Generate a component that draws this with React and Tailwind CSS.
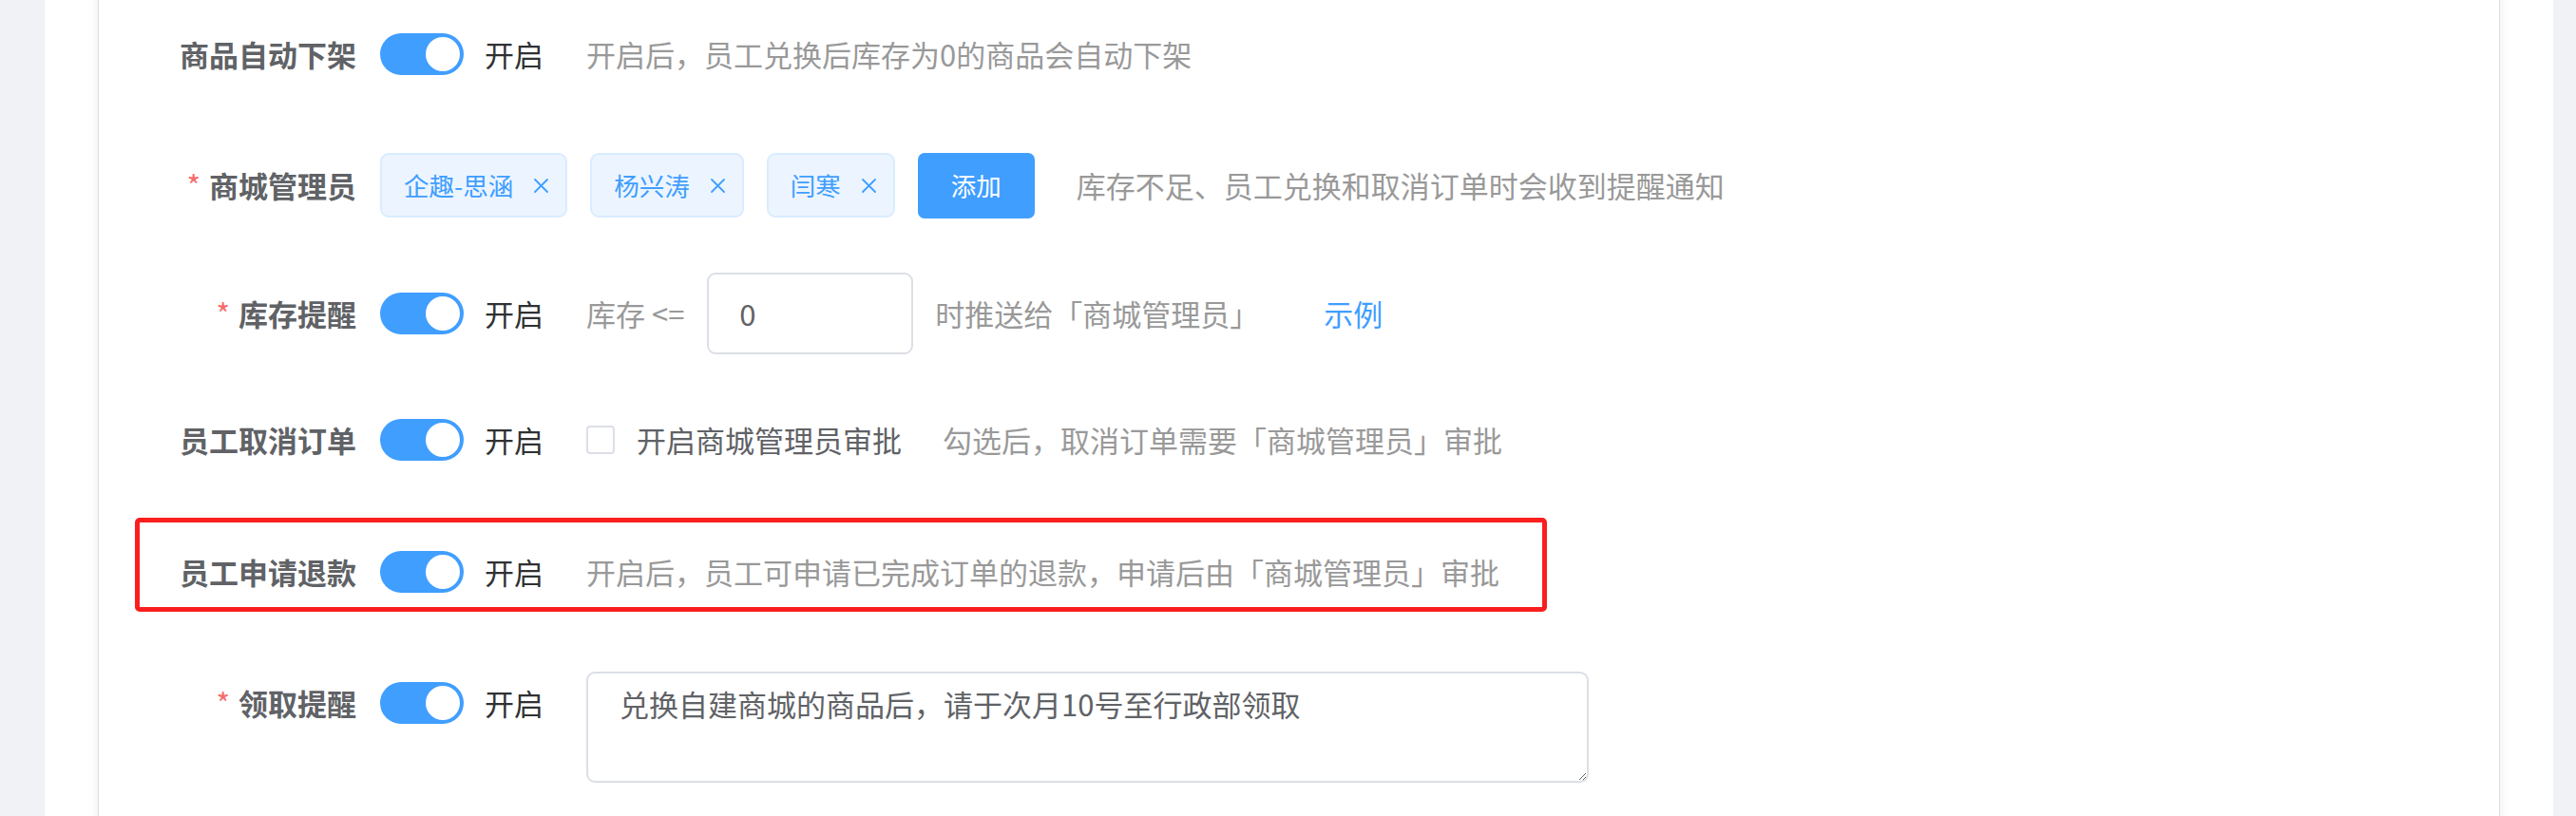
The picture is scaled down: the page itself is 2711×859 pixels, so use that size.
import React from 'react';

// ─── small parts ────────────────────────────────────────────────────────────

const Toggle = () => (
  <div className="relative w-[88px] h-[44px] rounded-full bg-[#409eff] shrink-0">
    <span className="absolute right-[4px] top-[4px] w-[36px] h-[36px] rounded-full bg-white" />
  </div>
);

const Label = ({ children, required }) => (
  <div className="w-[296px] pr-[25px] shrink-0 flex items-center justify-end h-[86px] text-[31px] font-bold text-[#606266]">
    {required && <span className="text-[#f56c6c] font-normal mr-[9px]">*</span>}
    {children}
  </div>
);

const SwitchOn = () => (
  <div className="flex items-center h-[86px] shrink-0">
    <Toggle />
    <span className="ml-[22px] text-[31px] text-[#303133]">开启</span>
  </div>
);

const Hint = ({ children, className = '' }) => (
  <span className={`text-[31px] text-[#999999] whitespace-nowrap ${className}`}>{children}</span>
);

const Tag = ({ name }) => (
  <div className="flex items-center h-[68px] pl-[23px] pr-[17px] gap-[21px] border-2 border-[#d9ecff] bg-[#ecf5ff] rounded-[9px] text-[26.5px] text-[#409eff] whitespace-nowrap">
    <span>{name}</span>
    <svg width="17" height="17" viewBox="0 0 17 17" className="shrink-0">
      <path d="M2 2 L15 15 M15 2 L2 15" stroke="#409eff" strokeWidth="1.8" strokeLinecap="round" />
    </svg>
  </div>
);

// ─── Page ───────────────────────────────────────────────────────────────────

const App = () => {
  return (
    <div className="relative w-full h-[859px] overflow-hidden flex bg-[#f0f2f5] font-['Noto_Sans_CJK_SC',sans-serif]">
      <div className="w-[47px] shrink-0" />

      <div className="flex-1 bg-white px-[56px]">
        {/* card runs past the top and bottom of the view */}
        <div className="-mt-[30px] h-[919px] flex flex-col bg-white border-x border-[#dcdfe6] shadow-[0_0_10px_rgba(0,0,0,0.08)]">
          {/* 商品自动下架 */}
          <div className="flex items-center mt-[44px] h-[86px]">
            <Label>商品自动下架</Label>
            <SwitchOn />
            <Hint className="ml-[45px]">开启后，员工兑换后库存为0的商品会自动下架</Hint>
          </div>

          {/* 商城管理员 */}
          <div className="flex items-center mt-[52px] h-[86px]">
            <Label required>商城管理员</Label>
            <div className="flex items-center gap-[24px]">
              <Tag name="企趣-思涵" />
              <Tag name="杨兴涛" />
              <Tag name="闫寒" />
              <button className="w-[123px] h-[69px] rounded-[7px] bg-[#409eff] text-white text-[26.5px]">
                添加
              </button>
            </div>
            <Hint className="ml-[44px]">库存不足、员工兑换和取消订单时会收到提醒通知</Hint>
          </div>

          {/* 库存提醒 */}
          <div className="flex items-center mt-[49px] h-[86px]">
            <Label required>库存提醒</Label>
            <SwitchOn />
            <Hint className="ml-[45px]">库存 &lt;=</Hint>
            <div className="ml-[24px] w-[217px] h-[86px] border-2 border-[#dcdfe6] rounded-[9px] flex items-center pl-[32px] text-[31px] text-[#606266]">
              0
            </div>
            <Hint className="ml-[23px]">时推送给「商城管理员」</Hint>
            <span className="ml-[68px] text-[31px] text-[#409eff]">示例</span>
          </div>

          {/* 员工取消订单 */}
          <div className="flex items-center mt-[47px] h-[86px]">
            <Label>员工取消订单</Label>
            <SwitchOn />
            <span className="ml-[45px] w-[30px] h-[30px] border-2 border-[#dcdfe6] rounded-[4px] bg-white shrink-0" />
            <span className="ml-[23px] text-[31px] text-[#606266] whitespace-nowrap">开启商城管理员审批</span>
            <Hint className="ml-[43px]">勾选后，取消订单需要「商城管理员」审批</Hint>
          </div>

          {/* 员工申请退款 */}
          <div className="flex items-center mt-[53px] h-[86px]">
            <Label>员工申请退款</Label>
            <SwitchOn />
            <Hint className="ml-[45px]">开启后，员工可申请已完成订单的退款，申请后由「商城管理员」审批</Hint>
          </div>

          {/* 领取提醒 */}
          <div className="flex items-start mt-[52px]">
            <Label required>领取提醒</Label>
            <SwitchOn />
            <textarea
              readOnly
              defaultValue="兑换自建商城的商品后，请于次月10号至行政部领取"
              className="ml-[45px] mt-[10px] w-[1055px] h-[117px] border-2 border-[#dcdfe6] rounded-[9px] px-[33px] py-[9px] text-[31px] leading-[1.5] text-[#606266] resize-y outline-none"
            />
          </div>
        </div>
      </div>

      <div className="w-[24px] shrink-0" />

      {/* highlight annotation */}
      <div className="absolute left-[142px] top-[545px] w-[1486px] h-[99px] border-[5px] border-[#fa1e1e] rounded-[5px] pointer-events-none" />
    </div>
  );
};

export default App;
